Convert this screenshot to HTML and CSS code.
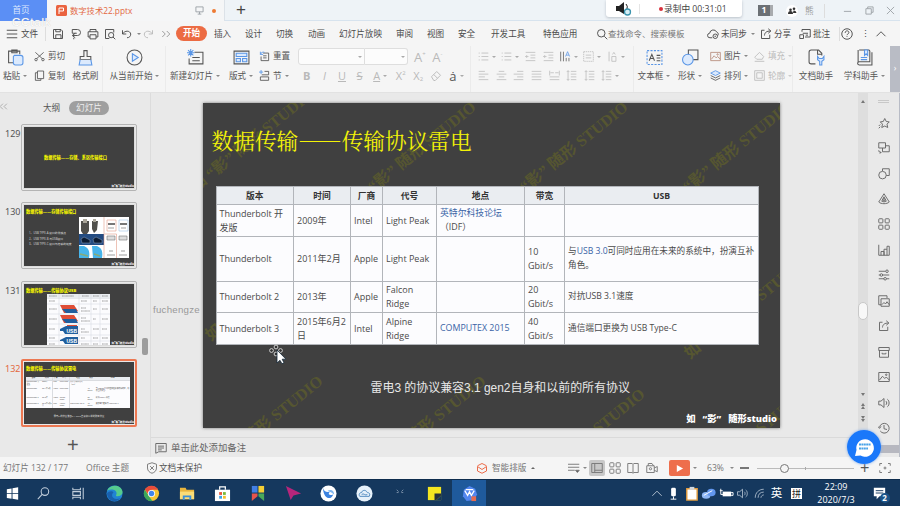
FILE: index.html
```html
<!DOCTYPE html>
<html lang="zh-CN">
<head>
<meta charset="utf-8">
<title>数字技术22.pptx</title>
<link rel="stylesheet" href="styles.css">
</head>
<body>
<svg class="defs" aria-hidden="true">
  <symbol id="save" viewBox="0 0 16 16"><path d="M2 2h10l2 2v10H2zM5 2v3h6V2M5 14V9h7v5"/></symbol>
  <symbol id="export" viewBox="0 0 16 16"><path d="M3 2h7a4 4 0 0 1 0 8H4M3 2v5h6M7 7l-4 3 4 3M5 13v2"/></symbol>
  <symbol id="print" viewBox="0 0 16 16"><path d="M4 5V2h8v3M4 12H1.500V5h13v7H12M4 9h8v5.500H4z"/></symbol>
  <symbol id="preview" viewBox="0 0 16 16"><path d="M7 14H2V2h11v4M12 12l3 3"/><circle cx="9.500" cy="9.500" r="3.500"/></symbol>
  <symbol id="undo" viewBox="0 0 16 16"><path d="M2 3v5h5M2 8c3-5 10-5 11 0 0 3-2 5-5 5"/></symbol>
  <symbol id="redo" viewBox="0 0 16 16"><path d="M14 3v5H9M14 8C11 3 4 3 3 8c0 3 2 5 5 5"/></symbol>
  <symbol id="more" viewBox="0 0 16 16"><path d="M3 4l4 4-4 4M9 4l4 4-4 4"/></symbol>
  <symbol id="less" viewBox="0 0 16 16"><path d="M7 3L2 8l5 5M14 3L9 8l5 5"/></symbol>
  <symbol id="search" viewBox="0 0 16 16"><circle cx="7" cy="7" r="5"/><path d="M11 11l4 4"/></symbol>
  <symbol id="cloud" viewBox="0 0 16 16"><path d="M7 13H4a3 3 0 0 1-.5-6A5 5 0 0 1 13 5.500c2 .5 2.500 3 1.500 4.500"/><circle cx="11" cy="11" r="3"/><path d="M10 11h2"/></symbol>
  <symbol id="share" viewBox="0 0 16 16"><path d="M6 3H2v11h11V9M6 10c0-4 3-6 8-6M11 1l3.500 3L11 7"/></symbol>
  <symbol id="note" viewBox="0 0 16 16"><path d="M4 5V2h11v10H8M1 9h5v5H1zM5 7h7M9 9.500h3"/></symbol>
  <symbol id="help" viewBox="0 0 16 16"><circle cx="8" cy="8" r="7"/><path d="M5.500 6.500c0-3.500 5-3.500 5-.5 0 2-2.500 2-2.500 3.500M8 11v1"/></symbol>
  <symbol id="up" viewBox="0 0 16 16"><path d="M2 11l6-6 6 6"/></symbol>
  <symbol id="paste" viewBox="0 0 16 16"><path d="M6 13H1.500V2H12v3M4.500 1h5v2.500h-5z"/><path class="bl" d="M7 6h6a2 2 0 0 1 2 2v5a2 2 0 0 1-2 2H8a2 2 0 0 1-2-2V7z"/></symbol>
  <symbol id="cut" viewBox="0 0 16 16"><path d="M2 2l10 9M14 2L4 11"/><circle cx="3" cy="12.500" r="1.800"/><circle cx="13" cy="12.500" r="1.800"/></symbol>
  <symbol id="copy" viewBox="0 0 16 16"><path d="M5 1.500h9v11H5zM5 4H2v11h8v-2"/></symbol>
  <symbol id="brush" viewBox="0 0 16 16"><path d="M6.500 7V1.500h3V7H13v3H3V7z"/><path class="bl" d="M3 10l-1 5h12l-1-5"/></symbol>
  <symbol id="play" viewBox="0 0 16 16"><circle cx="8" cy="8" r="7"/><path class="bl" d="M6 4.500L11.500 8 6 11.500z"/></symbol>
  <symbol id="newslide" viewBox="0 0 16 16"><path d="M7 3h8v11H2V9M5 8h7M5 11h7"/><path class="bn" d="M3.500 0v7M0 3.500h7M1 1l5 5M6 1L1 6"/></symbol>
  <symbol id="layout" viewBox="0 0 16 16"><path d="M1 2h14v12H1z"/><path class="bl" d="M3 4h10v3H3zM3 9h4v3H3zM9 9h4v3H9z"/></symbol>
  <symbol id="reset" viewBox="0 0 16 16"><path d="M6 3h8v11H3V8M6 7h5M6 10h5"/><path class="bn" d="M2 1v4h4M2 5c1-3 4-4 6-3"/></symbol>
  <symbol id="section" viewBox="0 0 16 16"><path d="M8 2h6v5H4M2 10h12v5H2z"/><path class="bn" d="M3 0v6M0 3h6"/></symbol>
  <symbol id="eraser" viewBox="0 0 16 16"><path d="M2 9l7-7 5 5-7 7H5zM5 6l5 5"/></symbol>
  <symbol id="bul" viewBox="0 0 16 16"><path d="M5 3h10M5 8h10M5 13h10M1 3h1.500M1 8h1.500M1 13h1.500"/></symbol>
  <symbol id="ind" viewBox="0 0 16 16"><path d="M1 2h14M8 6h7M8 10h7M1 14h14M5 8H1M3 6L1 8l2 2"/></symbol>
  <symbol id="al" viewBox="0 0 16 16"><path d="M1 2h9M1 6h14M1 10h9M1 14h14"/></symbol>
  <symbol id="ac" viewBox="0 0 16 16"><path d="M4 2h8M1 6h14M4 10h8M1 14h14"/></symbol>
  <symbol id="ar" viewBox="0 0 16 16"><path d="M6 2h9M1 6h14M6 10h9M1 14h14"/></symbol>
  <symbol id="aj" viewBox="0 0 16 16"><path d="M1 2h14M1 6h14M1 10h14M1 14h14"/></symbol>
  <symbol id="dist" viewBox="0 0 16 16"><path d="M1 1v7M15 1v7M2 4h5M9 4h5M1 10h14M1 14h14"/></symbol>
  <symbol id="lsp" viewBox="0 0 16 16"><path d="M7 2h8M7 6h8M7 10h8M7 14h8M3 1v14M1 3l2-2 2 2M1 13l2 2 2-2"/></symbol>
  <symbol id="tdir" viewBox="0 0 16 16"><path d="M1 1v14M5 1v14M9 10v5M13 10v5"/><path class="bn" d="M8 8l3-7 3 7M9 6h4"/></symbol>
  <symbol id="abox" viewBox="0 0 16 16"><path stroke-dasharray="2 1" d="M1 1h14v14H1z"/><path d="M4 6h8M4 10h8"/></symbol>
  <symbol id="vtx" viewBox="0 0 16 16"><path d="M3 1v14M7 8h6v7H7zM8 5l2-3 2 3"/></symbol>
  <symbol id="tbox" viewBox="0 0 16 16"><path class="bn" stroke-dasharray="2 1.200" d="M1 1.500h14v13H1z"/><path d="M3 11l2.500-6L8 11M4 9h3M10 6h3.500M10 8.500h3.500M10 11h3.500"/></symbol>
  <symbol id="shapes" viewBox="0 0 16 16"><path d="M6 1h9v9H6z"/><circle class="bl" cx="5.500" cy="10" r="5"/></symbol>
  <symbol id="shapeline" viewBox="0 0 16 16"><path d="M6 4V1h9v9h-4"/><circle cx="6" cy="9.500" r="5"/></symbol>
  <symbol id="pic" viewBox="0 0 16 16"><path d="M1 2h14v12H1z"/><path d="M2 12l4-5 3 3 2-2 4 4"/><circle cx="11" cy="5" r="1"/></symbol>
  <symbol id="layers" viewBox="0 0 16 16"><path class="bl" d="M8 1l7 3.500L8 8 1 4.500z"/><path d="M1 8l7 3.500L15 8M1 11.500L8 15l7-3.500"/></symbol>
  <symbol id="fill" viewBox="0 0 16 16"><path d="M3 7l5-5 6 6-2 4H4L1 9zM1 15h14"/></symbol>
  <symbol id="outline" viewBox="0 0 16 16"><path d="M1 1h14v14H1zM4 4h8v8H4z"/></symbol>
  <symbol id="dochelp" viewBox="0 0 16 16"><path d="M7 14H3a2 2 0 0 1-2-2V3a2 2 0 0 1 2-2h7l3 3v2M9 1v4h4"/><path class="bl" d="M9 7v3l2 1.500V15h2v-3.500l2-1.500V7l-1.500 2h-3z"/></symbol>
  <symbol id="subj" viewBox="0 0 16 16"><path d="M3 1h9a1 1 0 0 1 1 1v10H3a1.500 1.500 0 0 0 0 3h12V3M2 1v12"/><path class="bl" d="M8 1h3v5L9.500 4.500 8 6z"/><path class="bn" d="M4.500 8h6M4.500 10h6"/></symbol>
  <symbol id="star" viewBox="0 0 16 16"><path d="M9 2l2 4 4 .5-3 3 1 4.500-4-2-4 2 1-4.500-3-3L7 6zM1 12l2-2M1 15l2-2"/></symbol>
  <symbol id="swap" viewBox="0 0 16 16"><path d="M1 1h9v7H1zM10 5h5v8H6V8M1 11c0 2 1 3 3 3M2.500 12.500L4 14l-1.500 1.500"/></symbol>
  <symbol id="tri" viewBox="0 0 16 16"><path d="M8 1L1 12c3 3 11 3 14 0zM8 5l-3 6c2 1 4 1 6 0z"/><circle cx="8" cy="9" r="1.500"/></symbol>
  <symbol id="four" viewBox="0 0 16 16"><rect x="1" y="1" width="5.500" height="5.500" rx="1"/><rect x="9.500" y="1" width="5.500" height="5.500" rx="1"/><rect x="1" y="9.500" width="5.500" height="5.500" rx="1"/><rect x="9.500" y="9.500" width="5.500" height="5.500" rx="1"/></symbol>
  <symbol id="chart" viewBox="0 0 16 16"><path d="M1 1v14h14V3h-3v12M4 15v-5h4v5M8 15V7h4"/></symbol>
  <symbol id="sliders" viewBox="0 0 16 16"><path d="M1 3h9M1 8h2M6 8h9M1 13h7M11 13h4"/><circle cx="12" cy="3" r="1.700"/><circle cx="4.500" cy="8" r="1.700"/><circle cx="9.500" cy="13" r="1.700"/></symbol>
  <symbol id="pics" viewBox="0 0 16 16"><path d="M4 13H1V1h11v3M4 5h11v10H4zM5 13l3-3 2 2 2-3 3 4"/></symbol>
  <symbol id="box" viewBox="0 0 16 16"><path d="M1 2h14v4H1zM2 6v9h12V6M5.500 9v1.500h5V9"/></symbol>
  <symbol id="sound" viewBox="0 0 16 16"><path d="M1 5.500h3L8 2v12l-4-3.500H1zM10.500 5.500c1.500 1 1.500 4 0 5M12.500 3c3 2 3 8 0 10"/></symbol>
  <symbol id="clock" viewBox="0 0 16 16"><path d="M3 12A6.500 6.500 0 1 0 2 7M0 6l2 2.500L4 6M8 4v5l4 1"/></symbol>
  <symbol id="comment" viewBox="0 0 16 16"><path d="M1 2h14v11H5l-4 2zM4 5.500h8M4 8h8M4 10.500h5"/></symbol>
  <symbol id="shield" viewBox="0 0 16 16"><path d="M8 1l6 2v5c0 4-3 6-6 7-3-1-6-3-6-7V3zM5.500 5.500l5 5M10.500 5.500l-5 5"/></symbol>
  <symbol id="book" viewBox="0 0 16 16"><path d="M1 2h6l1 1 1-1h6v12H9l-1 1-1-1H1zM8 3v12"/></symbol>
  <symbol id="cam" viewBox="0 0 16 16"><path d="M1 5h10v9H1zM11 8l4-2v7l-4-2M3 5V2h5l2 3"/><circle cx="6" cy="9" r="1.500"/></symbol>
  <symbol id="full" viewBox="0 0 16 16"><path d="M1 5V2h3M12 2h3v3M15 11v3h-3M4 14H1v-3"/><circle cx="8" cy="8" r="1.300"/></symbol>
  <symbol id="wifi" viewBox="0 0 16 16"><path d="M2 14C2 7 7 2 14 2M6 14c0-5 3-8 8-8M10 14c0-2 2-4 4-4"/></symbol>
</svg>

<header class="titlebar">
  <div class="home">首页</div>
  <div class="filetab">
    <svg class="wpp" viewBox="0 0 11 11"><rect width="11" height="11" rx="1.500" fill="#ea6340"/><path d="M3 9V3h4.500v3H3" fill="none" stroke="#fff"/></svg>
    <span class="fname">数字技术22.pptx</span>
    <svg class="monitor" viewBox="0 0 10 10"><path d="M1 1h8v5.500H1zM5 6.500V9M3 9h4" fill="none" stroke="#9a9fa5"/></svg>
    <span class="dot"></span>
  </div>
  <div class="plus">+</div>
  <div class="recorder">
    <svg class="spk" viewBox="0 0 16 14"><path d="M0 4h3l5-4v12L3 9H0z" fill="#222"/><path d="M10 2q2 2 1 5" stroke="#222" fill="none"/><circle cx="11.500" cy="10" r="3" fill="#d7eff5" stroke="#3b94ae" stroke-width="1.300"/></svg>
    <i class="recdiv"></i><i class="recdot"></i><span>录制中 00:31:01</span>
  </div>
  <div class="win">
    <b class="one">1</b>
    <svg class="people" viewBox="0 0 12 12"><circle cx="6" cy="6" r="6" fill="#fff"/><path d="M2 9q0-3 2.500-3T7 9zM7 8h3.500Q10 5 7.500 5.500z" fill="#333"/><circle cx="4.500" cy="4.700" r="1.300" fill="#333"/><circle cx="8" cy="3.800" r="1.300" fill="#333"/></svg>
    <span>熊</span><i class="vs"></i>
    <svg class="wc" viewBox="0 0 10 10"><path d="M1 6h8"/></svg>
    <svg class="wc" viewBox="0 0 10 10"><path d="M1 3h6v6H1zM3 3V1h6v6H7"/></svg>
    <svg class="wc" viewBox="0 0 10 10"><path d="M1 1l8 8M9 1L1 9"/></svg>
  </div>
  <span class="cctalk">CCtalk</span>
</header>

<nav class="menu">
  <svg class="i" viewBox="0 0 16 16"><path d="M1 3h14M1 8h14M1 13h14"/></svg>
  <span>文件</span><i class="vs"></i>
  <svg class="i"><use href="#save"/></svg><svg class="i"><use href="#export"/></svg><svg class="i"><use href="#print"/></svg><svg class="i"><use href="#preview"/></svg>
  <svg class="i"><use href="#undo"/></svg><i class="car"></i>
  <svg class="i dim"><use href="#redo"/></svg><svg class="i mid"><use href="#more"/></svg>
  <b class="active">开始</b>
  <span>插入</span><span>设计</span><span>切换</span><span>动画</span><span>幻灯片放映</span><span>审阅</span><span>视图</span><span>安全</span><span>开发工具</span><span>特色应用</span>
  <svg class="i"><use href="#search"/></svg><span class="query">查找命令、搜索模板</span>
  <svg class="i"><use href="#cloud"/></svg><span>未同步</span><i class="car"></i>
  <svg class="i"><use href="#share"/></svg><span>分享</span>
  <svg class="i"><use href="#note"/></svg><span>批注</span><i class="vs"></i>
  <svg class="i"><use href="#help"/></svg><span>⋮</span><svg class="i"><use href="#up"/></svg>
</nav>

<section class="ribbon">
  <div class="big"><svg class="i"><use href="#paste"/></svg><span>粘贴<i class="car"></i></span></div>
  <div class="stack"><span><svg class="i"><use href="#cut"/></svg>剪切</span><span><svg class="i"><use href="#copy"/></svg>复制</span></div>
  <div class="big edge"><svg class="i"><use href="#brush"/></svg><span>格式刷</span></div>
  <div class="big edge"><svg class="i"><use href="#play"/></svg><span>从当前开始<i class="car"></i></span></div>
  <div class="big"><svg class="i"><use href="#newslide"/></svg><span>新建幻灯片<i class="car"></i></span></div>
  <div class="big"><svg class="i"><use href="#layout"/></svg><span>版式<i class="car"></i></span></div>
  <div class="stack"><span><svg class="i"><use href="#reset"/></svg>重置</span><span><svg class="i"><use href="#section"/></svg>节<i class="car gap"></i></span></div>
  <div class="fontgroup edge">
    <div class="line"><span class="combo c1"><i class="car"></i></span><span class="combo c2"><i class="car"></i></span><span class="cell grow">A<sup>+</sup></span><span class="cell grow">A<sup>-</sup></span></div>
    <div class="line"><b class="cell">B</b><em class="cell">I</em><u class="cell">U</u><s class="cell">S</s><span class="cell wide"><u>A</u><i class="car"></i></span><span class="cell">X<sup>2</sup></span><span class="cell">X<sub>2</sub></span><span class="cell"><svg class="i"><use href="#eraser"/></svg></span><span class="cell wide dark">ȧ<i class="car"></i></span></div>
  </div>
  <div class="para edge">
    <div class="line">
      <span class="cell wide"><svg class="i"><use href="#bul"/></svg><i class="car"></i></span><span class="cell wide"><svg class="i"><use href="#bul"/></svg><i class="car"></i></span><span class="cell"><svg class="i"><use href="#ind"/></svg></span><span class="cell"><svg class="i"><use href="#ind"/></svg></span><span class="cell wide dark"><svg class="i"><use href="#tdir"/></svg><i class="car"></i></span><span class="cell wide"><svg class="i"><use href="#abox"/></svg><i class="car"></i></span><span class="cell wide"><svg class="i"><use href="#vtx"/></svg><i class="car"></i></span>
    </div>
    <div class="line">
      <span class="cell"><svg class="i"><use href="#al"/></svg></span><span class="cell"><svg class="i"><use href="#ac"/></svg></span><span class="cell"><svg class="i"><use href="#ar"/></svg></span><span class="cell"><svg class="i"><use href="#aj"/></svg></span><span class="cell"><svg class="i"><use href="#dist"/></svg></span><span class="cell"><svg class="i"><use href="#lsp"/></svg></span><span class="cell"><svg class="i"><use href="#lsp"/></svg></span><span class="cell wide"><svg class="i"><use href="#lsp"/></svg><i class="car"></i></span>
    </div>
  </div>
  <div class="big"><svg class="i"><use href="#tbox"/></svg><span>文本框<i class="car"></i></span></div>
  <div class="big"><svg class="i"><use href="#shapes"/></svg><span>形状<i class="car"></i></span></div>
  <div class="stack"><span><svg class="i warm"><use href="#pic"/></svg>图片<i class="car"></i></span><span><svg class="i"><use href="#layers"/></svg>排列<i class="car"></i></span></div>
  <div class="stack off edge"><span><svg class="i"><use href="#fill"/></svg>填充<i class="car"></i></span><span><svg class="i"><use href="#outline"/></svg>轮廓<i class="car"></i></span></div>
  <div class="big"><svg class="i"><use href="#dochelp"/></svg><span>文档助手</span></div>
  <div class="big"><svg class="i"><use href="#subj"/></svg><span>学科助手<i class="car"></i></span></div>
  <div class="scroller">›</div>
</section>

<main class="work">
  <aside class="panel">
    <div class="tabs"><svg class="i mid"><use href="#less"/></svg><span>大纲</span><b>幻灯片</b></div>
    <div class="item"><span class="num">129</span><div class="thumb t129"><p class="tt">数据传输——存储、系区传输接口</p><p class="sig">如“影”随形studio</p></div></div>
    <div class="item"><span class="num">130</span><div class="thumb t130"><p class="tt">数据传输——存储传输接口</p>
      <div class="row"><div class="lst"><p>1、USB TYPE-A 接口的优缺点</p><p>2、USB TYPE-B 与USB接口</p><p>3、USB TYPE-C 接口与传输的速度</p></div>
      <svg class="ports" viewBox="0 0 50 41"><rect width="50" height="41" fill="#fff"/><path d="M2 4h8v10l-2 3H4l-2-3zM13 4h6l-1 9-3 3-2-4z" fill="#51504c"/><path d="M4 2h4v4H4zM14 2h3v3h-3z" fill="#aaa69a"/><path d="M0 17h25v11H0z" fill="#244c82"/><path d="M2 22l3-2 6 3v3H3zM14 22l3-2 6 3v3h-8z" fill="#0c1c33" stroke="#8ca3bd" stroke-width=".5"/><path d="M0 29h5c5 2 6 6 5 12H0zM13 29h5c5 2 6 6 5 12h-9z" fill="#48b4ea"/><path d="M1 37l8 2M15 37l6 2" stroke="#8a7" stroke-width="1.500"/><path d="M28 3h9v11h-9zM25.500 17h12v24M25 0v41" fill="none" stroke="#e39b86" stroke-width=".6"/><path d="M40 3h9v11h-9z" fill="none" stroke="#9fc4e6" stroke-width=".6"/><path d="M29 6h7v2h-7zM41 6h7v2h-7z" fill="#777"/><path d="M28 19h8v4h-8zM40 19h8v4h-8z" fill="#ddd" stroke="#777" stroke-width=".6"/><path d="M29 11h6M42 11h5M30 34h4M42 34h4M28 38h8M40 38h8" stroke="#777" stroke-width=".7"/></svg></div><p class="sig">如“影”随形studio</p></div></div>
    <div class="item"><span class="num">131</span><div class="thumb t131"><p class="tt">数据传输——传输协议USB</p>
      <svg class="usb" viewBox="0 0 63 52"><rect width="63" height="52" fill="#fcfcfe"/><path d="M0 0h63v4H0z" fill="#e9ecf0"/><path d="M0 4.500h63M0 10h63M0 20h63M0 30h63M0 41h63M0 47h63M12 0v52M32 0v52M44 0v52M53 0v52" stroke="#d3d6dc" stroke-width=".5"/><g id="logo"><path d="M13 11h14l4 6-5 2H17z" fill="#df4e37"/><path d="M15 15h14l2 4H19z" fill="#205f9e"/></g><use href="#logo" y="10"/><path d="M20 31h10v4H20z" fill="#df4e37"/><path d="M13 35l4-2 2-1h12v8H18l-2-3h-3zM13 46l4-2 2-1h12v7H18l-2-3h-3z" fill="#205f9e"/><g fill="#fff" font-size="5" font-weight="bold" font-family="Liberation Sans"><text x="19.500" y="39">USB</text><text x="19.500" y="48.500">USB</text></g><path d="M2 2h8M15 2h12M35 2h7M46 2h6M55 2h6M2 7h6M2 15h8M2 25h8M2 35h6M2 44h6M2 50h6M34 7h6M34 14h5M34 17h9M34 24h5M34 27h9M34 35h4M34 38h8M34 44h4M34 50h8M46 7h4M46 15h4M46 25h3M46 35h6M46 44h5M46 50h5M55 7h6M55 15h6M55 25h6M55 35h5M55 44h6M55 50h6" stroke="#777" stroke-width=".7" stroke-dasharray="1 .3"/></svg><p class="sig">如“影”随形studio</p></div></div>
    <div class="item"><span class="num hot">132</span><div class="thumb sel"><p class="tt">数据传输——传输协议雷电</p>
      <div class="mini"><b>版本</b><b>时间</b><b>厂商</b><b>代号</b><b>地点</b><b>带宽</b><b>USB</b>
      <span>Thunderbolt 开发版</span><span>2009年</span><span>Intel</span><span>Light Peak</span><span>英特尔科技论坛（IDF）</span><span></span><span></span>
      <span>Thunderbolt</span><span>2011年2月</span><span>Apple</span><span>Light Peak</span><span></span><span>10 Gbit/s</span><span>与USB 3.0可同时应用在未来的系统中，扮演互补角色。</span>
      <span>Thunderbolt 2</span><span>2013年</span><span>Apple</span><span>Falcon Ridge</span><span></span><span>20 Gbit/s</span><span>对抗USB 3.1速度</span>
      <span>Thunderbolt 3</span><span>2015年6月2日</span><span>Intel</span><span>Alpine Ridge</span><span>COMPUTEX 2015</span><span>40 Gbit/s</span><span>通信端口更换为 USB Type-C</span></div>
      <p class="cap">雷电3 的协议兼容3.1 gen2自身和以前的所有协议</p><p class="sig">如“影”随形studio</p></div></div>
    <div class="add">+</div>
    <i class="pthumb"></i>
  </aside>
  <div class="stage">
    <div class="canvas">
      <article class="slide">
        <svg class="marks" viewBox="0 0 577 325">
          <g>
            <text transform="translate(112 -7) rotate(-39)">如 “影” 随形 STUDIO</text>
            <text transform="translate(274 6) rotate(-39)">如 “影” 随形 STUDIO</text>
            <text transform="translate(426 6) rotate(-39)">如 “影” 随形 STUDIO</text>
            <text transform="translate(589 6) rotate(-39)">如 “影” 随形 STUDIO</text>
            <text transform="translate(121 280) rotate(-39)">如 “影” 随形 STUDIO</text>
            <text transform="translate(284 280) rotate(-39)">如 “影” 随形 STUDIO</text>
            <text transform="translate(443 293) rotate(-39)">如 “影” 随形 STUDIO</text>
            <text transform="translate(606 293) rotate(-39)">如 “影” 随形 STUDIO</text>
            <text transform="translate(606 160) rotate(-39)">如 “影” 随形 STUDIO</text>
            <text transform="translate(127 142) rotate(-39)">如 “影” 随形 STUDIO</text>
          </g>
        </svg>
        <h1>数据传输——传输协议雷电</h1>
        <table>
          <colgroup><col class="k1"><col class="k2"><col class="k3"><col class="k4"><col class="k5"><col class="k6"><col class="k7"></colgroup>
          <tr class="r0"><th>版本</th><th>时间</th><th>厂商</th><th>代号</th><th>地点</th><th>带宽</th><th>USB</th></tr>
          <tr class="r1"><td>Thunderbolt 开<br>发版</td><td>2009年</td><td>Intel</td><td>Light Peak</td><td><a>英特尔科技论坛</a><br>（IDF）</td><td></td><td></td></tr>
          <tr class="r2"><td>Thunderbolt</td><td>2011年2月</td><td>Apple</td><td>Light Peak</td><td></td><td>10<br>Gbit/s</td><td>与<a>USB 3.0</a>可同时应用在未来的系统中，扮演互补<br>角色。</td></tr>
          <tr class="r3"><td>Thunderbolt 2</td><td>2013年</td><td>Apple</td><td>Falcon<br>Ridge</td><td></td><td>20<br>Gbit/s</td><td>对抗USB 3.1速度</td></tr>
          <tr class="r4"><td>Thunderbolt 3</td><td>2015年6月2<br>日</td><td>Intel</td><td>Alpine<br>Ridge</td><td><a>COMPUTEX 2015</a></td><td>40<br>Gbit/s</td><td>通信端口更换为 USB Type-C</td></tr>
        </table>
        <p class="caption">雷电3 的协议兼容3.1 gen2自身和以前的所有协议</p>
        <p class="sign"><span>如</span><span>“影”</span><span>随形studio</span></p>
        <svg class="cursor" viewBox="0 0 18 20"><g fill="#333" stroke="#ddd" stroke-width=".9"><circle cx="8" cy="3" r="1.900"/><circle cx="3.500" cy="6.500" r="1.900"/><circle cx="12.500" cy="6.500" r="1.900"/><circle cx="8" cy="10" r="1.900"/></g><path d="M9 6v13l3-2.700 2 3.500 2-1-1.800-3.600H18z" fill="#fff" stroke="#142a3a" stroke-width=".8"/></svg>
      </article>
      <div class="vscroll"><i class="tri up"></i><i class="vthumb"></i><i class="tri dn"></i><span class="pair"><i class="tri up"></i><i class="tri up"></i></span><span class="pair"><i class="tri dn"></i><i class="tri dn"></i></span></div>
    </div>
    <div class="notes"><svg class="i"><use href="#comment"/></svg>单击此处添加备注</div>
    <span class="user">fuchengze</span>
  </div>
  <aside class="tools">
    <i class="grip"></i>
    <svg class="i"><use href="#star"/></svg><svg class="i"><use href="#swap"/></svg><svg class="i"><use href="#shapeline"/></svg><svg class="i"><use href="#tri"/></svg><svg class="i"><use href="#four"/></svg><svg class="i"><use href="#chart"/></svg><svg class="i"><use href="#sliders"/></svg><svg class="i"><use href="#pics"/></svg><svg class="i"><use href="#share"/></svg><svg class="i"><use href="#box"/></svg><svg class="i"><use href="#pic"/></svg><svg class="i"><use href="#sound"/></svg><svg class="i"><use href="#clock"/></svg>
    <i class="foot"></i>
  </aside>
  <div class="bubble"><svg viewBox="0 0 34 34"><circle cx="17" cy="17" r="17" fill="#1a78fa"/><path d="M8 26l1.500-6a8.800 8.800 0 1 1 4 5.500z" fill="#fff"/><path d="M12 14.500h12M12 18.500h9" stroke="#4aa3e8" stroke-width="1.800" stroke-dasharray="2 .4"/></svg></div>
</main>

<footer class="status">
  <span>幻灯片 132 / 177</span><span>Office 主题</span><svg class="i"><use href="#shield"/></svg><span class="strong">文档未保护</span>
  <svg class="i hot" viewBox="0 0 16 16"><path d="M2 5l6-3 6 3M2 6v6l6 3 6-3V6l-6 4z"/></svg><span>智能排版</span><i class="car flip"></i>
  <svg class="i" viewBox="0 0 16 16"><path d="M0 3h15M0 7h15M0 11h9"/><path d="M10 11h5l-2.500 3z" fill="#555"/></svg><i class="car"></i>
  <span class="view"><svg class="i" viewBox="0 0 16 16"><path d="M1 2h14v12H1zM5 2v12M5 11h10"/></svg></span>
  <svg class="i"><use href="#four"/></svg><svg class="i"><use href="#book"/></svg><svg class="i"><use href="#cam"/></svg>
  <span class="show"><svg viewBox="0 0 10 10"><path d="M2 1l7 4-7 4z" fill="#fff"/></svg></span><i class="car"></i>
  <span>63%</span><i class="car"></i><i class="minus"></i>
  <span class="slider"><i class="knob"></i><i class="tick"></i></span><b class="zoomin">+</b><svg class="i"><use href="#full"/></svg>
</footer>

<div class="taskbar">
  <svg viewBox="0 0 18 18"><path d="M3 4.500l5-.8v5H3zM9 3.500l6-1v6.200H9zM3 9.500h5v5l-5-.7zM9 9.500h6v6l-6-.9z" fill="#fff"/></svg>
  <svg viewBox="0 0 18 18" class="ln"><circle cx="10.500" cy="7" r="4"/><path d="M7.500 10L3 15"/></svg>
  <svg viewBox="0 0 18 18" class="ln"><path d="M3 3v2h8V3M3 15v-2h8v2M3 7h8v4H3zM14 3v12"/></svg>
  <svg viewBox="0 0 18 18"><circle cx="9" cy="9" r="8.500" fill="#2183d4"/><path d="M1 6C4-1 16-1 17.500 7c.5 5-6 6-7 4 3-5-4-8-9.500-5z" fill="#55cb8e"/><path d="M1 9c2-3 6-3 7-1-4 3 0 9 7 6-5 6-13 3-14-5z" fill="#1960ae"/></svg>
  <svg viewBox="0 0 18 18"><circle cx="9" cy="9" r="8" fill="#f5c534"/><path d="M2 5a8 8 0 0 1 14 0H9L6 10z" fill="#e84c3c"/><path d="M2 5l5 8 3 4A8 8 0 0 1 2 5z" fill="#3ba75a"/><circle cx="9" cy="9" r="3.800" fill="#fff"/><circle cx="9" cy="9" r="2.900" fill="#4186ec"/></svg>
  <svg viewBox="0 0 18 18"><path d="M1 3h6l1 2h8v10H1z" fill="#e9b53d"/><path d="M1 7h15v8H1z" fill="#fbdd77"/><path d="M4 16v-5h9v5h-2v-3H6v3z" fill="#3b90d8"/></svg>
  <svg viewBox="0 0 18 18"><path d="M1 5h16v12H1z" fill="#fff"/><path d="M6 5V2h6v3" fill="none" stroke="#fff" stroke-width="1.300"/><path d="M5.500 7.500h3v3h-3z" fill="#eb5439"/><path d="M9.500 7.500h3v3h-3z" fill="#7ab93a"/><path d="M5.500 11.500h3v3h-3z" fill="#3aa1e6"/><path d="M9.500 11.500h3v3h-3z" fill="#f6be2c"/></svg>
  <svg viewBox="0 0 18 18"><path d="M3 1h6v7H3z" fill="#427fe5"/><path d="M10 1h6v7h-6z" fill="#f4cf35"/><path d="M3 9h6v3l-6 5z" fill="#e8544d"/><path d="M10 9h6v8l-6-5z" fill="#49a85a"/></svg>
  <svg viewBox="0 0 18 18"><path d="M1 1l16 8-8 2-3 5z" fill="#b6267b"/></svg>
  <svg viewBox="0 0 18 18"><circle cx="9" cy="9" r="8.500" fill="#fff"/><path d="M3 3c1 4 4 5 8 4-3 2-2 5 3 3-2 6-10 6-11-7z" fill="#3b83e0"/><path d="M8 6c4-2 7 0 7 4l-3-2z" fill="#7fb6f0"/></svg>
  <svg viewBox="0 0 18 18"><circle cx="9" cy="9" r="8.500" fill="#e6f1fa"/><path d="M4 12h10c2-4-2-4-2-4-2-4-6-2-6 0-3 0-3 3-2 4zM6 10c2-2 4 2 6 0" fill="none" stroke="#4d87bd"/></svg>
  <svg viewBox="0 0 18 18"><path d="M6 5l2 2M13 5l-2 2M6 8h2M11 8h2" stroke="#7d93ab"/></svg>
  <svg viewBox="0 0 18 18"><path d="M2 2h14v14H2z" fill="#f4e620"/><path d="M9 9h7v2l-5 5H9z" fill="#26313b"/><path d="M16 11v5h-5z" fill="#15385e"/></svg>
  <span class="wps"><svg viewBox="0 0 18 18"><path d="M9 1l6 3 2 6-3 6-8 1-4-5 1-7z" fill="#5387ef"/><path d="M4 6l3 5 2-4 2 4 3-5M5 5h8" fill="none" stroke="#fff" stroke-width="1.300"/><path d="M11 12h5v5h-5z" fill="#e66b4f"/></svg></span>
  <svg viewBox="0 0 18 18" class="ln tray"><path d="M3 12l6-6 6 6"/></svg>
  <svg viewBox="0 0 18 18"><rect x="6.500" y="3" width="5" height="9" rx="1.500" fill="#fff"/><path d="M9 12v3M6 15h6" stroke="#fff"/></svg>
  <svg viewBox="0 0 18 18"><path d="M4 4h11v12H4z" fill="#fff" stroke="#e09a3d" stroke-width="1.500"/><path d="M7 2h5v3H7z" fill="#cfd7df"/></svg>
  <svg viewBox="0 0 18 18"><ellipse cx="6.500" cy="11" rx="4.500" ry="3.500" fill="#8fb8f6"/><ellipse cx="12" cy="8" rx="4.500" ry="4" fill="#6297ee"/><path d="M4 11l9-5" stroke="#fff"/></svg>
  <svg viewBox="0 0 18 18"><path d="M6 7h9v5H6z" fill="#fff"/><path d="M3 6h3M4 4v6h3M15 8h2v3h-2" fill="none" stroke="#fff"/></svg>
  <svg class="ln" viewBox="-4 -4 24 24"><use href="#sound" width="16" height="16"/></svg>
  <svg class="ln" viewBox="-4 -4 24 24"><use href="#wifi" width="16" height="16"/></svg>
  <span class="ime">英</span><span class="pin">拼</span>
  <div class="time"><span>22:09</span><span>2020/7/3</span></div>
  <div class="bell"><svg viewBox="0 0 18 18"><path d="M3 3h12v9H9l-3 3v-3H3z" fill="#fff"/><path d="M5 6h8M5 8.500h8" stroke="#15385e"/></svg><b>2</b></div>
</div>
</body>
</html>
```
FILE: styles.css
```css
* { box-sizing: border-box; }
body {
  margin: 0; width: 900px; height: 506px; overflow: hidden;
  display: grid; grid-template-rows: 21px 25px 47px 364px 22px 27px;
  font: 8.600px/12px "Open Sans", "Noto Sans CJK SC", sans-serif;
  color: #555; background: #f5f5f5; white-space: nowrap;
}
p, h1 { margin: 0; }
.defs { position: absolute; width: 0; height: 0; }
.i { width: 12px; height: 12px; fill: none; stroke: currentColor; stroke-width: 1.250; flex: none; }
.bl { fill: #dceafd; stroke: #5a96e6; }
.bn { fill: none; stroke: #5a96e6; }
.dim { color: #bbb; }
.mid { color: #999; }
.hot { color: #ea6340; }
.car { display: inline-block; flex: none; width: 0; height: 0; border: 2px solid transparent; border-top: 2.500px solid #888; border-bottom: 0; margin-left: 3px; }
.car.flip { border-top: 0; border-bottom: 2.500px solid #666; }
.vs { width: 1px; height: 14px; background: #ddd; }

.titlebar { position: relative; z-index: 2; display: grid; grid-template-columns: 47px 178px 381px 136px 1fr; background: #eef3f7; border-bottom: 1px solid #d7e3ee; }
.home { background: #5b8ff5; color: #dce8ff; text-align: center; padding-right: 5px; line-height: 21px; }
.filetab { display: grid; grid-template-columns: 14px 125px 17px 10px; align-items: center; padding-left: 9px; background: #f5f6f7; border-right: 1px solid #dce2e8; height: 21px; color: #e3683f; }
.wpp { width: 11px; height: 11px; }
.fname { font-size: 8.300px; }
.monitor { width: 9px; height: 9px; }
.dot { width: 4px; height: 4px; border-radius: 50%; background: #ee7a33; }
.plus { font: 17px/20px "Liberation Sans", sans-serif; padding-left: 11px; color: #444; }
.recorder { height: 17px; background: #fff; border-radius: 0 0 3px 3px; box-shadow: 0 1px 3px #b9c0c8; display: grid; grid-template-columns: 23px 20px 5px 1fr; padding-left: 10px; align-items: center; font-size: 8.700px; color: #444; }
.spk { width: 16px; height: 14px; }
.recdiv { width: 1px; height: 10px; background: #e5e5e5; }
.recdot { width: 4px; height: 4px; border-radius: 50%; background: #d8303c; }
.win { display: grid; grid-template-columns: 28px 19px 19px 19px 22px 21px 12px; align-items: center; padding-left: 16px; color: #999; }
.one { width: 15px; height: 11px; background: #6b7075; border-right: 3px solid #a8abae; color: #fff; text-align: center; line-height: 11px; }
.people { width: 12px; height: 12px; }
.wc { width: 9px; height: 9px; fill: none; stroke: #9ca1a6; }
.cctalk { position: absolute; left: 12px; top: 16px; font: 11.500px/12px "Liberation Sans", sans-serif; letter-spacing: .8px; color: #fff; text-shadow: 0 0 1px #bbb; }

.menu { display: grid; align-items: center; color: #4c4c4c; grid-template-columns: 15px 24px 7px 18px 17px 17px 17px 13px 8px 18px 16px 38px 31px 31px 32px 31px 57px 31px 31px 33px 52px 53px 12px 99px 14px 27px 12px 14px 25px 14px 26px 2px 20px 14px 12px; padding-left: 6px; }
.menu .active { width: 31px; height: 15px; line-height: 15px; border-radius: 8px; background: #ec6b43; color: #fff; text-align: center; }
.menu .query { font-size: 8.500px; color: #777; }

.ribbon { display: grid; grid-template-columns: 30px 38px 35px 63px 58px 34px 39px 174px 163px 40px 32px 44px 43px 46px 51px 10px; border-bottom: 1px solid #e2e2e2; }
.ribbon > div { min-width: 0; }
.edge { box-shadow: inset -1px 0 #ebebeb; }
.big { display: grid; grid-template-rows: 23px 14px; justify-items: center; align-items: center; align-content: start; }
.big .i { width: 17px; height: 17px; stroke-width: 1; }
.big span { display: flex; align-items: center; }
.stack { display: grid; grid-template-rows: 20px 19px; align-content: start; padding-left: 4px; }
.stack:nth-child(7) { padding-left: 1px; }
.stack span { display: flex; align-items: center; gap: 3px; }
.stack .car { margin-left: 0; }
.stack .i { width: 11px; height: 11px; }
.off { color: #bcbcbc; }
.off .car { border-top-color: #ccc; }
.warm { color: #b78c7c; }
.line { display: flex; align-items: center; height: 19px; }
.fontgroup, .para { padding-top: 1px; color: #b9b9b9; }
.fontgroup { padding-left: 1px; font-size: 11px; }
.para { padding-left: 4px; }
.combo { height: 17px; background: #fcfcfc; border: 1px solid #dedede; display: flex; justify-content: flex-end; align-items: center; padding-right: 2px; }
.c1 { width: 67px; border-radius: 3px 0 0 3px; }
.c2 { width: 43px; border-left: 0; border-radius: 0 3px 3px 0; margin-right: 3px; }
.line .car { border-top-color: #aaa; }
.cell { width: 17.600px; display: flex; justify-content: center; align-items: center; flex: none; }
.cell.wide { width: 23.500px; }
.cell.grow { font-size: 13px; }
.cell sup, .cell sub { font-size: 6px; line-height: 6px; }
.cell sup { align-self: flex-start; }
.cell sub { align-self: flex-end; }
u.cell, s.cell { text-decoration-thickness: 1px; }
.dark { color: #555; font-size: 13px; }
.para .i { width: 11px; height: 11px; stroke-width: 1.100; }
.scroller { background: #b9bcc5; color: #fff; line-height: 44px; text-align: center; }

.work { position: relative; display: grid; grid-template-columns: 151px 717px 32px; background: #e9e9e9; }
.panel { position: relative; border-right: 1px solid #dcdcdc; display: grid; grid-template-rows: 31px 78.300px 78.300px 78.300px 76px 22px; }
.tabs { display: grid; grid-template-columns: 43px 26px 40px; align-items: center; height: 29px; }
.tabs .i { width: 9px; height: 9px; margin-left: -1px; margin-top: -3px; }
.tabs b { background: #9f9f9f; color: #eee; font-weight: 400; text-align: center; border-radius: 8px; height: 14px; line-height: 14px; }
.item { display: grid; grid-template-columns: 21px 116px; }
.num { font: 9px/20px "Noto Sans", sans-serif; padding-left: 5px; }
.num.hot { color: #e3683f; }
.thumb { height: 67px; border: 1px solid #b4b4b4; outline: 1px solid #ddd; outline-offset: -3px; padding: 2px; background: #404040 content-box; border-radius: 2px; color: #ddd; display: flex; flex-direction: column; overflow: hidden; }
.thumb.sel { border: 2px solid #ec7852; padding: 1px; outline: 0; height: 68px; }
.tt { font-size: 4.200px; line-height: 6px; font-weight: 900; color: #f5f500; padding: 4px 0 0 2px; }
.sig { font-size: 2.800px; line-height: 3px; margin-top: auto; text-align: right; font-weight: bold; color: #fff; }
.t129 .tt { padding: 28px 0 0 20px; }
.row { display: grid; grid-template-columns: 55px 50px; margin-top: 2px; }
.lst { padding: 14px 0 0 5px; font-size: 2.800px; line-height: 5.600px; }
.ports { width: 50px; height: 41px; }
.usb { width: 63px; height: 52px; margin-left: 23px; flex: none; }
.t131 .sig { margin-top: -4px; }
.mini { display: grid; grid-template-columns: 15px 11px 6px 10px 17px 8px 34.600px; grid-template-rows: 3.500px 6px 8.500px 5.700px 5.700px; margin: 5px 0 0 2px; background: #dadce0; width: 104px; gap: .4px; flex: none; overflow: hidden; color: #444; font-size: 1.800px; line-height: 2.700px; white-space: normal; }
.mini > * { background: #fcfcfe; padding: .5px; overflow: hidden; min-width: 0; }
.mini b { background: #e9ecf0; text-align: center; }
.cap { text-align: center; font-size: 2.350px; line-height: 4px; margin-top: 6px; }
.add { font: 20px/20px "Liberation Sans", sans-serif; padding-left: 67px; color: #555; }
.pthumb { position: absolute; left: 142px; top: 245px; width: 6px; height: 17px; border-radius: 2px; background: #9c9c9c; }

.stage { position: relative; display: grid; grid-template-rows: 345px 19px; }
.canvas { display: grid; grid-template-columns: 577px 10px; justify-content: space-between; padding-left: 52px; border-bottom: 1px solid #dadada; }
.slide { position: relative; margin-top: 9.500px; height: 325px; background: #404040; box-shadow: 0 0 3px #777; padding: 0 0 0 12.500px; isolation: isolate; }
.marks { position: absolute; inset: 0; width: 577px; height: 325px; z-index: -1; overflow: hidden; font: bold 16px "Liberation Serif", "Noto Sans CJK SC", serif; fill: #565631; text-anchor: end; }
.slide h1 { font: 400 21.700px/30px "Noto Serif CJK SC", "Noto Sans CJK SC", serif; color: #f2f208; height: 83.500px; padding-top: 22px; margin-left: -4px; }
table { border-collapse: collapse; table-layout: fixed; width: 543px; height: 159px; background: #fcfcfe; color: #4a4a4a; font-size: 9px; line-height: 13.700px; }
td, th { border: 1px solid #b2b5ba; padding: 0 0 0 3px; }
td:last-child { font-size: 8.650px; }
th { background: #eaedf1; padding: 0; font-size: 8.700px; color: #333; line-height: 12px; }
td a { color: #3a64a6; }
td:nth-child(5) { font-size: 8.850px; }
.k1 { width: 77.500px; } .k2 { width: 57px; } .k3 { width: 32px; } .k4 { width: 54px; } .k5 { width: 88px; } .k6 { width: 40px; } .k7 { width: 194px; }
.r0 { height: 18px; } .r1 { height: 32px; } .r2 { height: 45px; } .r3 { height: 31px; } .r4 { height: 32px; }
.caption { font: 11.950px/16px "Liberation Sans", "Noto Sans CJK SC", sans-serif; color: #e8e8e8; margin: 35px 0 0 155px; }
.sign { font-size: 9.300px; font-weight: 900; color: #fff; line-height: 14px; display: flex; justify-content: flex-end; gap: 7px; margin: 16px 3px 0 0; }
.cursor { position: absolute; left: 65px; top: 241px; width: 18px; height: 20px; }
.vscroll { background: #dedede; display: grid; grid-template-rows: 10px 217px 76px 13px 13px; justify-items: center; align-items: end; }
.tri { display: block; border: 2px solid transparent; width: 0; height: 0; }
.tri.up { border-bottom: 3px solid #777; border-top: 0; }
.tri.dn { border-top: 3px solid #777; border-bottom: 0; }
.vthumb { width: 10px; height: 18px; border-radius: 5px; background: #f8f8f8; border: 1px solid #c8c8c8; }
.notes { display: flex; align-items: center; gap: 4px; padding-left: 4px; font-size: 9.400px; color: #666; }
.user { position: absolute; left: 2px; top: 211px; font: 9.700px/12px "Liberation Sans", sans-serif; letter-spacing: .25px; color: #999; }
.tools { display: grid; grid-template-rows: 17px repeat(13, 25.450px) 8px; align-content: start; justify-items: center; align-items: center; border-right: 1px solid #b8bcc6; color: #666; }
.grip { width: 11px; height: 3px; border: 1px solid #c8c8c8; border-width: 1px 0; }
.foot { width: 100%; height: 8px; margin-top: 8px; background: #b7b8c0; }
.bubble { position: absolute; left: 847px; top: 337px; width: 34px; height: 34px; border-radius: 50%; box-shadow: 0 0 3px #78a8ee; }
.bubble svg { display: block; }

.status { display: grid; align-items: center; grid-template-columns: 83px 60px 13px 317px 16px 37px 39px 13px 8px 20px 18px 19px 23px 22px 16px 21px 12px 17px 103px 19px 12px; padding-left: 3px; color: #777; }
.status .strong { color: #555; }
.status .car { margin-left: 2px; }
.view { width: 16px; height: 16px; background: #c8c8c8; border-radius: 2px; display: grid; place-items: center; }
.show { width: 21px; height: 16px; background: #ee6e4c; border-radius: 2px; display: grid; place-items: center; }
.show svg { width: 9px; height: 9px; }
.minus { width: 9px; height: 2px; background: #777; }
.slider { width: 97px; height: 9px; display: grid; grid-template-columns: 48px 1fr; align-items: center; background: linear-gradient(#bbb, #bbb) center / 100% 1px no-repeat; }
.knob { width: 9px; height: 9px; border: 1px solid #777; border-radius: 50%; background: #f5f5f5; margin-left: 23px; }
.tick { width: 1px; height: 3px; background: #aaa; }
.zoomin { font: 16px/16px "Liberation Sans", sans-serif; color: #555; }

.taskbar { display: grid; grid-template-columns: 25px 37px 33px 38px 37px 34px 36px 35px 36px 35px 36px 35px 35px 34px 179px 17px 18px 17px 17px 17px 17px 17px 23px 56px 30px; background: #15385e; border-top: 1px solid #0e2d4e; align-items: center; justify-items: center; }
.taskbar svg { width: 17px; height: 17px; }
.ln { fill: none; stroke: #c3cfdc; stroke-width: 1.100; }
.taskbar .tray { justify-self: end; margin-right: 1px; width: 14px; }
.wps { width: 34px; height: 26px; background: #1f5a9c; display: grid; place-items: center; }
.ime { color: #fff; font-size: 11.500px; }
.pin { width: 11px; height: 11px; font-size: 9px; line-height: 11px; background: #fff; color: #222; text-align: center; }
.time { display: grid; text-align: center; color: #fff; font-size: 9px; line-height: 13px; }
.bell { position: relative; width: 17px; height: 17px; }
.bell b { position: absolute; left: 9px; top: 8px; width: 10px; height: 10px; line-height: 10px; border-radius: 50%; background: #1c5488; color: #fff; text-align: center; font-size: 8px; }
```
